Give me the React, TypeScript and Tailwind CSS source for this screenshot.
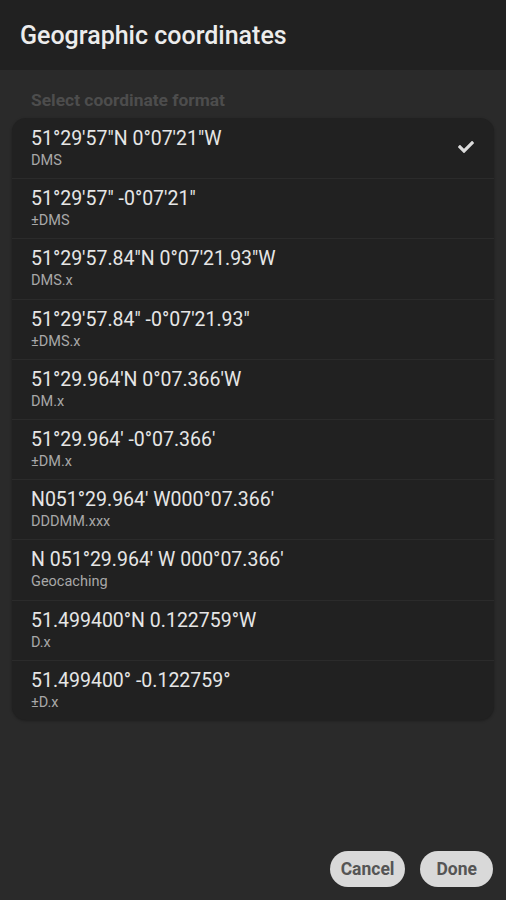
import { FaCheck } from "react-icons/fa"

const formats = [
  { value: "51°29'57\"N 0°07'21\"W", label: "DMS", selected: true },
  { value: "51°29'57\" -0°07'21\"", label: "±DMS" },
  { value: "51°29'57.84\"N 0°07'21.93\"W", label: "DMS.x" },
  { value: "51°29'57.84\" -0°07'21.93\"", label: "±DMS.x" },
  { value: "51°29.964'N 0°07.366'W", label: "DM.x" },
  { value: "51°29.964' -0°07.366'", label: "±DM.x" },
  { value: "N051°29.964' W000°07.366'", label: "DDDMM.xxx" },
  { value: "N 051°29.964' W 000°07.366'", label: "Geocaching" },
  { value: "51.499400°N 0.122759°W", label: "D.x" },
  { value: "51.499400° -0.122759°", label: "±D.x" },
]

export default function App() {
  return (
    <div className="w-[506px] h-[900px] bg-[#2a2a2a] flex flex-col font-['Roboto',sans-serif] overflow-hidden">
      {/* Title bar */}
      <div className="h-[70px] shrink-0 bg-[#212121] flex items-center px-5 pt-[2px]">
        <h1 className="text-[25px] font-medium text-[#ececec]">Geographic coordinates</h1>
      </div>

      <div className="flex-1 flex flex-col px-3">
        <div className="h-[48px] flex items-center px-[19px] pt-[12px]">
          <span className="text-[17.4px] font-bold text-[#4d4d4d]">Select coordinate format</span>
        </div>

        <div className="bg-[#212121] rounded-[14px] overflow-hidden shadow-[0_1px_3px_rgba(0,0,0,0.3)]">
          {formats.map((f, i) => (
            <div
              key={f.label}
              className={`h-[60.2px] flex items-center justify-between pl-[19px] pr-[20px] ${i > 0 ? "border-t border-[#2b2b2b]" : ""}`}
            >
              <div className="flex flex-col">
                <span className="text-[19.5px] text-[#e6e6e6] leading-[24px]">{f.value}</span>
                <span className="text-[14.5px] text-[#a8a8a8] leading-[19px]">{f.label}</span>
              </div>
              {f.selected && <FaCheck className="w-[16px] h-[16px] text-[#dcdcdc] -mt-[2px]" />}
            </div>
          ))}
        </div>

        <div className="flex-1" />

        <div className="flex justify-end gap-[15px] pb-[13px] pr-[1px]">
          <button className="h-[36px] px-[11px] rounded-full bg-[#d9d9d9] text-[#555] text-[17.5px] font-bold">Cancel</button>
          <button className="h-[36px] px-[16px] rounded-full bg-[#d9d9d9] text-[#555] text-[17.5px] font-bold">Done</button>
        </div>
      </div>
    </div>
  )
}
